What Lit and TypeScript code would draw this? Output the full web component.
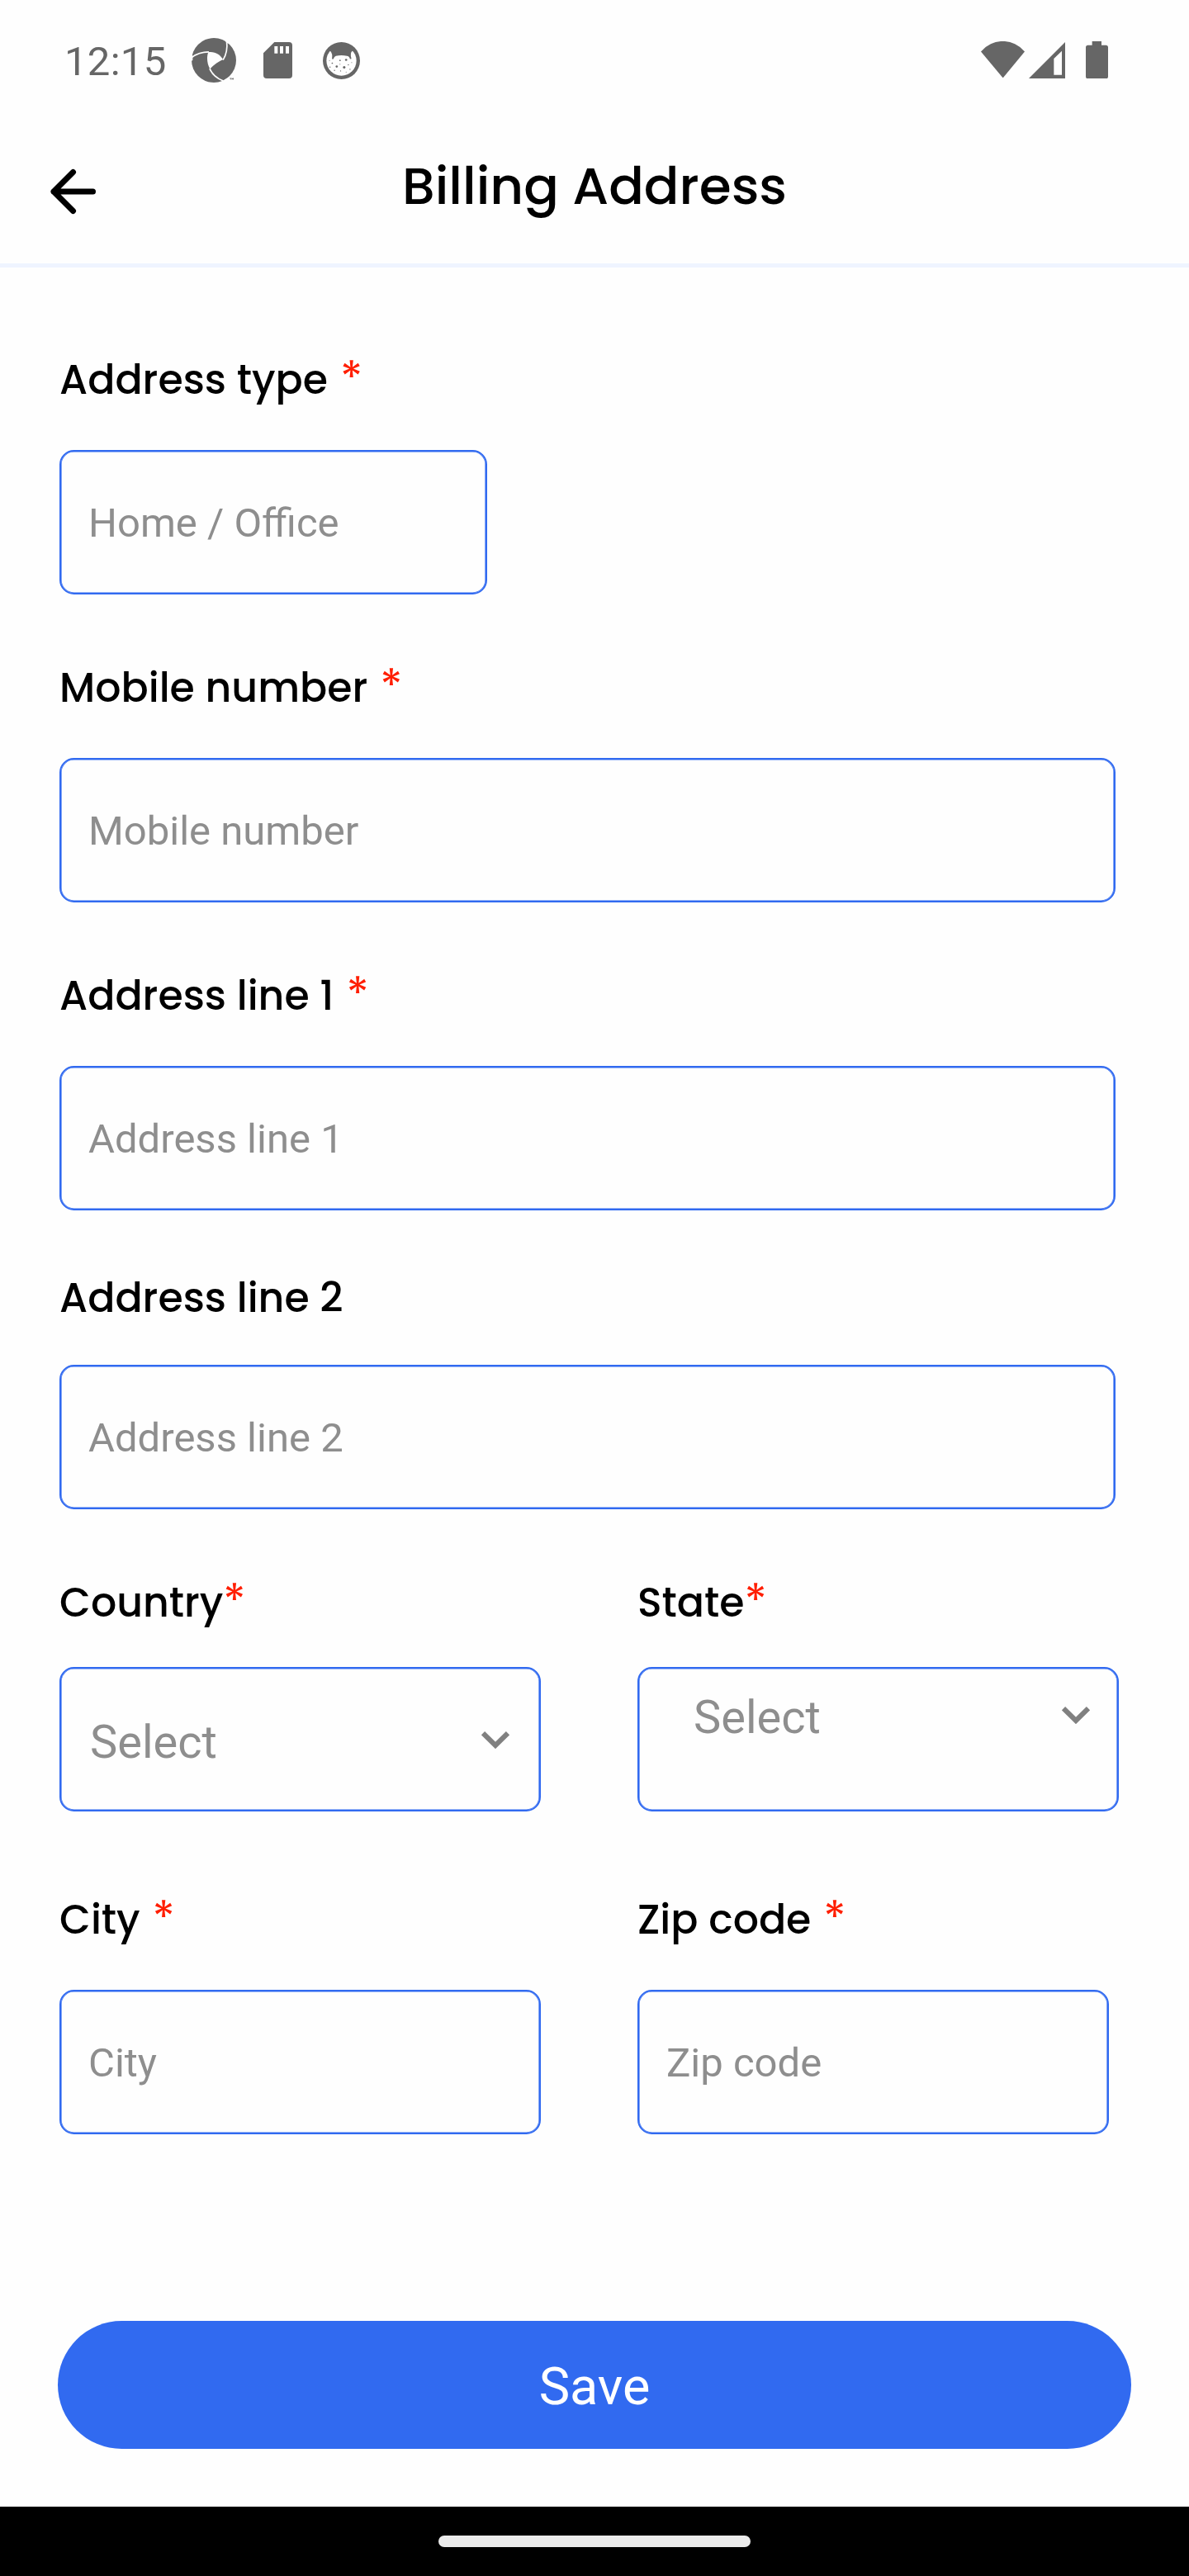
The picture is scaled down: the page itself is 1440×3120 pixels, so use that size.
import { LitElement, html, css, nothing, type TemplateResult } from 'lit';
import { customElement, property } from 'lit/decorators.js';
import { classMap } from 'lit/directives/class-map.js';

@customElement('status-bar')
class StatusBar extends LitElement {
  static styles = css`
    :host {
      display: flex;
      align-items: center;
      height: 146px;
      padding: 0 98px 0 78px;
      box-sizing: border-box;
      color: #666;
      font: 400 49px/58px Roboto, sans-serif;
    }
    svg { display: block; flex: none; fill: #666; }
    .time { letter-spacing: 0.3px; padding-top: 3px; width: 154px; }
    .shutter { width: 54px; height: 54px; margin-right: 33px; }
    .card { width: 35px; height: 44px; margin-right: 37px; }
    .cat { width: 45px; height: 45px; margin-right: auto; }
    .wifi { width: 53px; height: 44.5px; margin: 0 5px 2px 0; }
    .signal { width: 44px; height: 44px; margin-right: 25px; }
    .battery { width: 27px; height: 45.5px; margin-bottom: 1px; }
    .cut { fill: #fefefe; }
    .seam { fill: none; stroke: #fefefe; stroke-width: 5; }
  `;

  render() {
    return html`
      <span class="time">12:15</span>
      <svg class="shutter" viewBox="0 0 160 160">
        <circle cx="80" cy="80" r="80" />
        <path class="cut" d="M60 51 C82 47 103 59 113 77 C99 84 80 95 66 111 C56 94 53 70 60 51Z" />
        <path class="seam" d="M-2 72 C16 57 38 50 62 50" />
        <path class="seam" d="M126 10 C129 34 126 58 113 79" />
        <path class="seam" d="M65 110 C75 133 92 146 114 154" />
        <path class="cut" d="M114 0 L132 0 L132 20 L125 16 Z M100 162 L128 144 L142 160 Z M-3 64 L4 62 L4 80 L-3 84Z" />
        <path d="M137 144h6v1.600h-2v4h-2v-4h-2z M144 144h2l1.500 2 1.500-2h2v5.600h-2v-3l-1.500 2-1.500-2v3h-2z" />
      </svg>
      <svg class="card" viewBox="0 0 105 132">
        <path d="M40 0H93Q105 0 105 12V120Q105 132 93 132H12Q0 132 0 120V40Z" />
        <path class="cut" d="M40 15h12v26h-12z M60 15h12v26h-12z M81 15h12v26h-12z" />
      </svg>
      <svg class="cat" viewBox="0 0 134 134">
        <circle cx="67" cy="67" r="67" />
        <circle class="cut" cx="67" cy="67" r="54" />
        <path d="M20 36 Q40 8 67 10 Q94 8 114 36 L106 32 Q97 40 103 60 L98 61 Q95 50 87 50 Q67 45 47 50 Q41 52 38 61 L33 61 Q36 40 26 31Z" />
        <circle cx="50" cy="88" r="4" />
        <circle cx="77" cy="91" r="4.500" />
        <circle cx="84" cy="64" r="4" />
        <circle cx="62" cy="66" r="2.500" />
        <circle cx="34" cy="76" r="2.500" />
        <circle cx="24" cy="66" r="1.500" />
        <circle cx="26" cy="90" r="2" />
        <circle cx="42" cy="102" r="2" />
        <circle cx="62" cy="80" r="1.500" />
        <circle cx="64" cy="104" r="2" />
        <circle cx="92" cy="82" r="2" />
        <circle cx="104" cy="74" r="1.500" />
        <circle cx="98" cy="98" r="2" />
        <circle cx="84" cy="108" r="1.500" />
      </svg>
      <svg class="wifi" viewBox="0 0 159 133">
        <path d="M0 37 A103 103 0 0 1 159 37 L80 133Z" />
      </svg>
      <svg class="signal" viewBox="0 0 132 132">
        <path d="M0 132 L132 0 V132Z" />
        <path class="cut" d="M91 60 L120 32 V119 H91Z" />
      </svg>
      <svg class="battery" viewBox="0 0 81 136">
        <path d="M23 0H57V14H73Q81 14 81 22V128Q81 136 73 136H8Q0 136 0 128V22Q0 14 8 14H23Z" />
      </svg>
    `;
  }
}

@customElement('page-header')
class PageHeader extends LitElement {
  static styles = css`
    :host {
      display: grid;
      grid-template-columns: 1fr auto 1fr;
      align-items: start;
      height: 178px;
      padding: 32px 60px 0;
      box-sizing: border-box;
      border-bottom: 5px solid #eff4ff;
    }
    h1 { margin: 0; font: 500 63px/94px Poppins, Inter, sans-serif; color: #000; }
    svg {
      display: block;
      width: 57px;
      height: 58px;
      margin-top: 25px;
      fill: none;
      stroke: #000;
      stroke-width: 7;
      stroke-linecap: round;
      stroke-linejoin: round;
    }
  `;

  render() {
    return html`
      <svg viewBox="0 0 57 58"><path d="M28.500 5.500 L5 29 L28.500 52.500 M5 29 H52.500" /></svg>
      <h1>Billing Address</h1>
    `;
  }
}

@customElement('form-field')
class FormField extends LitElement {
  static styles = css`
    :host { display: block; }
    .label {
      height: 60px;
      font: 500 49px/60px Poppins, Inter, sans-serif;
      color: #000;
      white-space: pre;
    }
    .star { font-size: 56px; font-weight: 400; line-height: 0; color: #ff1e00; }
    .box {
      display: flex;
      align-items: flex-start;
      justify-content: space-between;
      height: 175px;
      margin-top: 55px;
      padding: 58px 33px 0;
      box-sizing: border-box;
      border: 2px solid #316af0;
      border-radius: 17.5px;
      box-shadow: inset 0 0 0 0.6px #316af0;
      color: #8e8e8e;
      font: 400 49px/58px Roboto, sans-serif;
    }
    .snug { margin-top: 51px; }
    .select { margin-top: 48px; padding: 56px 36px 0 35px; font-size: 56px; line-height: 66px; }
    .raised { padding: 26px 33px 0 66px; }
    svg {
      display: block;
      width: 34px;
      height: 21px;
      margin-top: 20px;
      fill: none;
      stroke: #808080;
      stroke-width: 6;
    }
  `;

  @property() label = '';
  @property() gap = ' ';
  @property() placeholder = '';
  @property({ type: Boolean }) required = false;
  @property({ type: Boolean }) select = false;
  @property({ type: Boolean }) raised = false;

  render() {
    const star: TemplateResult | typeof nothing = this.required
      ? html`<span class="star">${this.gap}*</span>`
      : nothing;
    const box = { box: true, snug: !this.required, select: this.select, raised: this.raised };
    return html`
      <div class="label">${this.label}${star}</div>
      <div class=${classMap(box)}>
        <span>${this.placeholder}</span>
        ${this.select
          ? html`<svg viewBox="0 0 34 21"><path d="M2 2.200 L17 17 L32 2.200" /></svg>`
          : nothing}
      </div>
    `;
  }
}

@customElement('app-root')
class AppRoot extends LitElement {
  static styles = css`
    :host {
      display: flex;
      flex-direction: column;
      width: 1440px;
      height: 3120px;
      background: #fefefe;
    }
    .form { flex: 1; padding: 106px 0 0 72px; }
    .full { width: 1278.500px; margin-bottom: 83px; }
    .short { width: 518px; margin-bottom: 83px; }
    .tight { margin-bottom: 76px; }
    .pair { display: grid; grid-template-columns: 583px 583px; column-gap: 117px; margin-bottom: 101px; }
    .zip { width: 571px; }
    .save {
      height: 155px;
      margin: 0 70px 70px;
      padding: 0;
      border: 0;
      border-radius: 78px;
      background: #316af0;
      color: #fff;
      font: 400 63px/159px Roboto, sans-serif;
      text-align: center;
    }
    .nav { display: flex; justify-content: center; height: 84px; background: #000; }
    .pill { width: 378px; height: 14px; margin-top: 35px; border-radius: 7px; background: #ebebeb; }
  `;

  render() {
    return html`
      <status-bar></status-bar>
      <page-header></page-header>
      <div class="form">
        <form-field class="short" label="Address type" placeholder="Home / Office" required></form-field>
        <form-field class="full" label="Mobile number" placeholder="Mobile number" required></form-field>
        <form-field class="full tight" label="Address line 1" placeholder="Address line 1" required></form-field>
        <form-field class="full" label="Address line 2" placeholder="Address line 2"></form-field>
        <div class="pair">
          <form-field label="Country" gap="" placeholder="Select" required select></form-field>
          <form-field label="State" gap="" placeholder="Select" required select raised></form-field>
        </div>
        <div class="pair">
          <form-field label="City" placeholder="City" required></form-field>
          <form-field class="zip" label="Zip code" placeholder="Zip code" required></form-field>
        </div>
      </div>
      <button class="save">Save</button>
      <div class="nav"><div class="pill"></div></div>
    `;
  }
}
